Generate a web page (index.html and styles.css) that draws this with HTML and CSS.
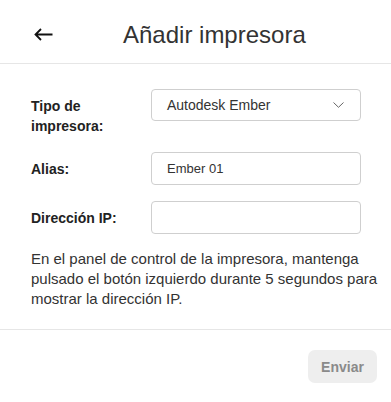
FILE: index.html
```html
<!DOCTYPE html>
<html lang="es">
<head>
<meta charset="utf-8">
<title>Añadir impresora</title>
<link rel="stylesheet" href="styles.css">
</head>
<body>
<div class="dialog">
  <header class="header">
    <button class="back" aria-label="Atrás">
      <svg width="19" height="13" viewBox="0 0 19 13"><path d="M18.5 6.5H1.6M7 1L1.5 6.5L7 12" fill="none" stroke="#111" stroke-width="1.8"/></svg>
    </button>
    <h1 class="title">Añadir impresora</h1>
  </header>
  <main class="body">
    <div class="form">
      <div class="row">
        <label class="label">Tipo de impresora:</label>
        <div class="select">
          <span>Autodesk Ember</span>
          <svg width="11" height="6" viewBox="0 0 11 6"><path d="M0.5 0.5L5.5 5.3L10.5 0.5" fill="none" stroke="#666" stroke-width="1"/></svg>
        </div>
      </div>
      <div class="row">
        <label class="label">Alias:</label>
        <input class="input" type="text" value="Ember 01">
      </div>
      <div class="row">
        <label class="label">Dirección IP:</label>
        <input class="input" type="text" value="">
      </div>
    </div>
    <p class="hint">En el panel de control de la impresora, mantenga pulsado el botón izquierdo durante 5 segundos para mostrar la dirección IP.</p>
  </main>
  <footer class="footer">
    <button class="send">Enviar</button>
  </footer>
</div>
</body>
</html>
```
FILE: styles.css
```css
* { box-sizing: border-box; }
html, body { margin: 0; padding: 0; background: #fff; }
body { font-family: "Liberation Sans", Arial, sans-serif; color: #333; width: 391px; }

.header {
  height: 64px;
  padding: 6px 0 0 34px;
  display: flex;
  align-items: center;
  border-bottom: 1px solid #e6e6e6;
}
.back {
  border: 0;
  background: none;
  padding: 0;
  margin: 0;
  width: 19px;
  height: 13px;
  display: flex;
  cursor: pointer;
}
.title {
  margin: 0 0 0 70px;
  font-size: 24px;
  font-weight: normal;
  color: #333;
  line-height: 28px;
}

.body {
  padding: 25px 8px 20px 31px;
  border-bottom: 1px solid #e6e6e6;
}
.form { display: flex; flex-direction: column; gap: 16px; margin-right: 22px; }
.row { display: flex; align-items: flex-start; }
.label {
  width: 120px;
  flex: none;
  padding-top: 7px;
  padding-right: 20px;
  font-size: 14px;
  line-height: 20px;
  font-weight: bold;
  color: #222;
}
.select, .input {
  flex: 1;
  height: 33px;
  border: 1px solid #cfcfcf;
  border-radius: 4px;
  font-family: inherit;
  font-size: 13px;
  color: #333;
  background: #fff;
}
.select {
  height: 32px;
  font-size: 14px;
  display: flex;
  align-items: center;
  justify-content: space-between;
  padding: 0 16px 0 15px;
}
.select svg { display: block; }
.input { padding: 0 15px; outline: none; margin: 0; }

.hint {
  margin: 15px 0 0;
  font-size: 15px;
  line-height: 20px;
  color: #333;
}

.footer {
  display: flex;
  justify-content: flex-end;
  padding: 20px 14px 19px;
}
.send {
  width: 69px;
  height: 33px;
  border: 0;
  border-radius: 7px;
  background: #eeeeee;
  color: #8a8a8a;
  font-family: inherit;
  font-size: 14px;
  font-weight: bold;
  cursor: pointer;
}
```
